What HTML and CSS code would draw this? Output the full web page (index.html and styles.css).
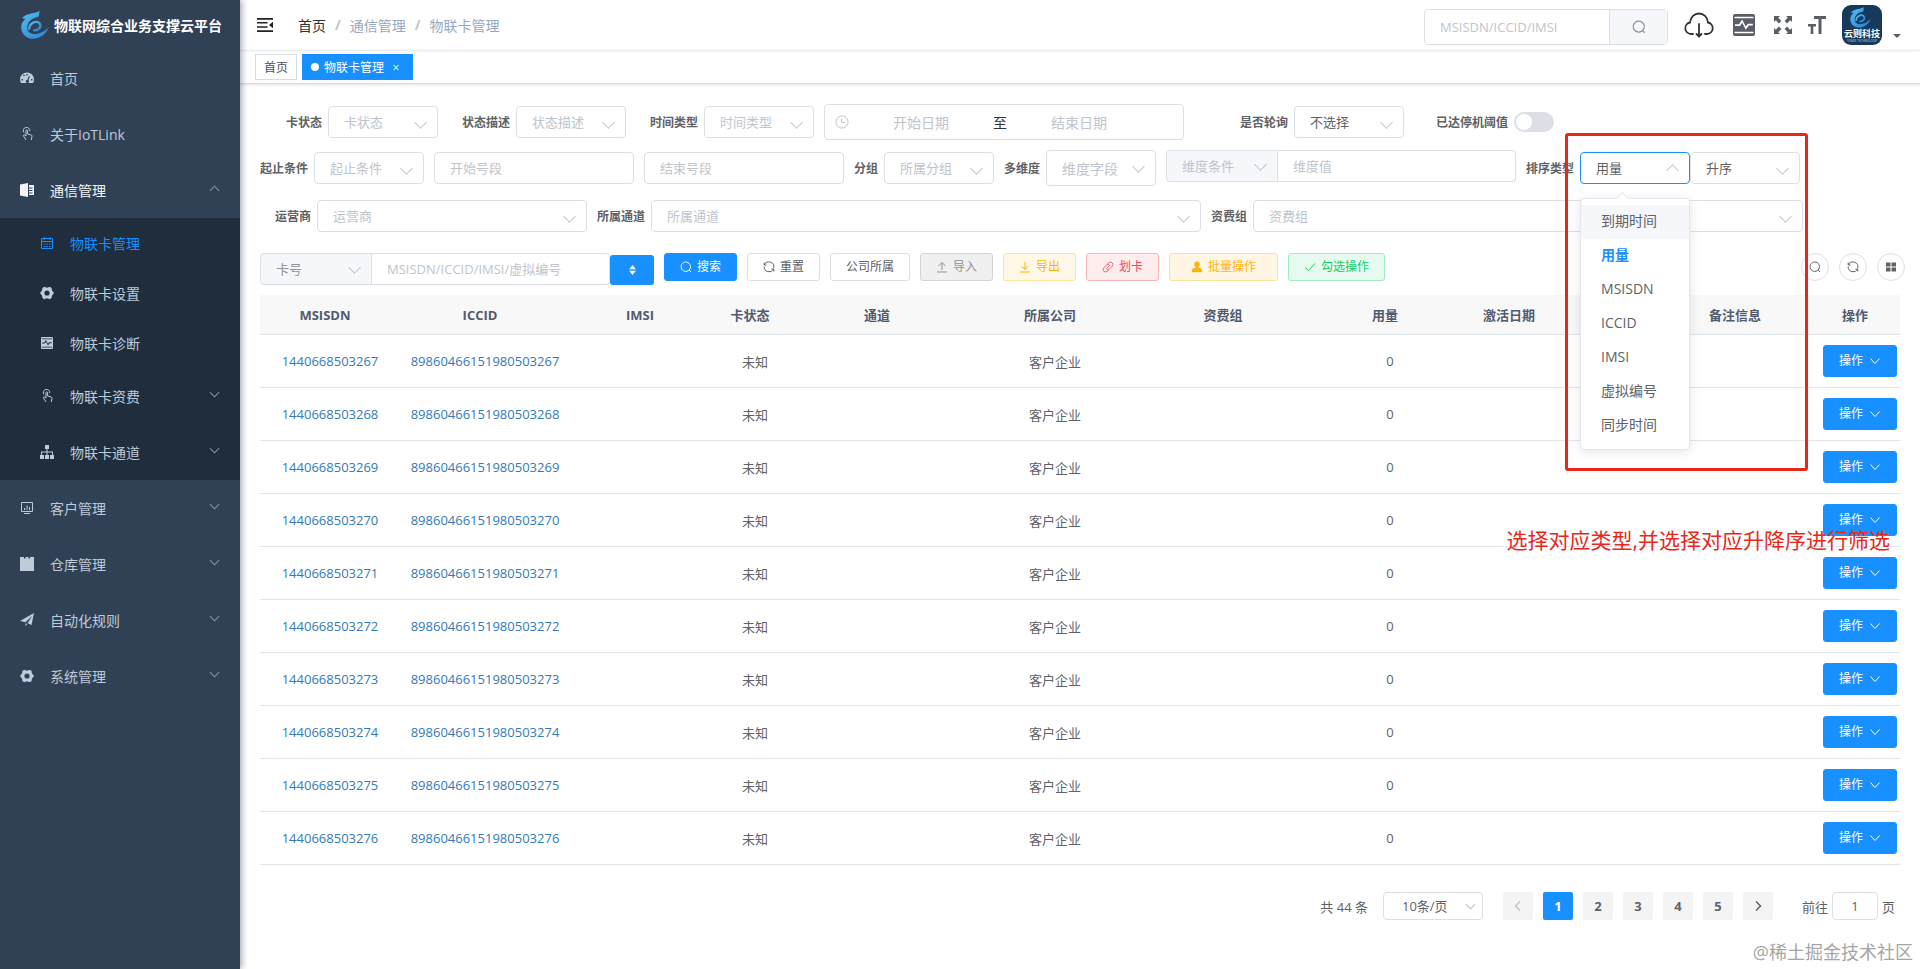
FILE: index.html
```html
<!DOCTYPE html>
<html lang="zh-CN">
<head>
    <meta charset="UTF-8">
    <meta name="viewport" content="width=device-width, initial-scale=1.0">
    <title>物联卡管理</title>
    <link rel="stylesheet" href="styles.css">
</head>
<body>
    <svg class="sprite" aria-hidden="true">
        <defs>
            <linearGradient id="logo-blue" x1="0" y1="0" x2="1" y2="1">
                <stop offset="0" stop-color="#52bdf0"/>
                <stop offset="1" stop-color="#2a7fd0"/>
            </linearGradient>
        </defs>
        <symbol id="i-logo" viewBox="0 0 86 84">
            <path fill="url(#logo-blue)" d="M57 0 54 17C30 20 17 38 20 55c4 20 40 20 65-7C76 72 52 86 32 83 8 80-4 56 4 36l10-13-10-1C16 6 38 9 57 0Z"/>
            <path fill="none" stroke="url(#logo-blue)" stroke-width="7" d="M25 56C25 38 44 27 56 36 65 46 54 60 38 58"/>
        </symbol>
        <symbol id="i-dashboard" viewBox="0 0 14 14">
            <path fill="currentColor" fill-rule="evenodd" d="M7 1.500a7 7 0 0 0-7 7c0 1.400.4 2.600 1 3.500h12c.6-.9 1-2.100 1-3.500a7 7 0 0 0-7-7ZM6.300 3h1.400v1.500H6.300ZM3 4.300l1-.9 1 1-1 1ZM1.500 8H3v1.400H1.500ZM11 8h1.500v1.400H11ZM8.800 5l1.100.4-1.400 3.700a1.600 1.600 0 1 1-1.100-.4Z"/>
        </symbol>
        <symbol id="i-finger" viewBox="0 0 14 14">
            <path fill="none" stroke="currentColor" d="M4 5.500A3.200 3.200 0 1 1 9.700 4M6 9V3.600a.8.8 0 0 1 1.600 0V7l3.400.9c.9.300 1.100 1 .9 1.800L11.300 13M6 9 4.600 8c-1-.4-1.600.4-1 1.200L6 13"/>
        </symbol>
        <symbol id="i-book" viewBox="0 0 14 14">
            <path fill="currentColor" fill-rule="evenodd" d="M0 1.500 8 0v14l-8-1.500ZM9 2h5v10H9v-1.500h3.500v-1H9V8h3.500V7H9V5.500h3.500v-1H9Z"/>
        </symbol>
        <symbol id="i-calendar" viewBox="0 0 14 14">
            <path fill="none" stroke="currentColor" d="M1.500 2.500h11v10h-11ZM1.500 5.500h11M4 1v3M10 1v3M3.500 8h1.500M6.300 8h1.500M9 8h1.500M3.500 10.500h1.500M6.300 10.500h1.500M9 10.500h1.500"/>
        </symbol>
        <symbol id="i-gear" viewBox="0 0 14 14">
            <path fill="currentColor" fill-rule="evenodd" d="M4 .8 7 1.800 10 .8l1.700 1.400.2 2L14 7l-2.100 2.800-.2 2L10 13.200l-3-1-3 1-1.700-1.400-.2-2L0 7l2.100-2.800.2-2ZM7 4.400a2.600 2.600 0 1 0 0 5.200 2.600 2.600 0 0 0 0-5.200Z"/>
        </symbol>
        <symbol id="i-monitor" viewBox="0 0 22 22">
            <path fill="currentColor" fill-rule="evenodd" d="M2 0h18q2 0 2 2v18q0 2-2 2H2q-2 0-2-2V2q0-2 2-2ZM1.500 2.800v1.400h19V2.800ZM1.500 17.800v1.400h19v-1.400ZM2 10.200v1.800h5l2.200-3.200 3.600 7 3-4.300h4v-1.700h-5l-2 2.800-3.700-7L6 10.200Z"/>
        </symbol>
        <symbol id="i-tree" viewBox="0 0 14 14">
            <path fill="currentColor" d="M5 0h4v4H7.500v2.500H13V10h1v4h-4v-4h2V7.500H7.500V10H9v4H5v-4h1.500V7.500H2V10h2v4H0v-4h1V6.500h5.500V4H5Z"/>
        </symbol>
        <symbol id="i-screen" viewBox="0 0 14 14">
            <path fill="none" stroke="currentColor" d="M1.500 1.500h11v9h-11ZM4 12.500h6M4.500 9V7M7 9V4.500M9.500 9V6"/>
        </symbol>
        <symbol id="i-box" viewBox="0 0 14 14">
            <path fill="currentColor" d="M0 0h4v1.500h1.500V0h3v1.500H10V0h4v14H0Z"/>
        </symbol>
        <symbol id="i-plane" viewBox="0 0 14 14">
            <path fill="currentColor" d="M14 0 11.500 12 7.500 10.200 12 3 5.500 9.300 0 8ZM5.500 10.300 7.200 11 5.500 13.500Z"/>
        </symbol>
        <symbol id="i-fold" viewBox="0 0 16 14">
            <path fill="currentColor" d="M0 0h16v1.800H0ZM0 4h10.500v1.600H0ZM0 8.200h10.500v1.600H0ZM0 12.200h16V14H0ZM16 3.800v6.400L12 7Z"/>
        </symbol>
        <symbol id="i-cloud" viewBox="0 0 30 26">
            <path fill="none" stroke="currentColor" stroke-width="1.800" stroke-linecap="round" d="M9 22H7A5.800 5.800 0 0 1 6 10.500C6.500 5 10.500 1.500 15 1.500S23.500 5 24 10.500A5.800 5.800 0 0 1 23 22H21M15 12v12M12.500 22l2.500 2.500 2.500-2.500"/>
        </symbol>
        <symbol id="i-full" viewBox="0 0 18 18">
            <path fill="currentColor" d="M0 0h6L4.200 1.800l3.200 3.200L5 7.400 1.800 4.200 0 6ZM18 0v6l-1.800-1.800L13 7.400 10.600 5l3.200-3.200L12 0ZM0 18v-6l1.800 1.800L5 10.600 7.400 13l-3.200 3.200L6 18ZM18 18h-6l1.800-1.800-3.200-3.200 2.400-2.400 3.200 3.200L18 12Z"/>
        </symbol>
        <symbol id="i-size" viewBox="0 0 18 18">
            <path fill="currentColor" d="M6 0h12v3h-4.500v15h-3V3H6ZM0 8h8v2.600H5.300V18H2.700v-7.400H0Z"/>
        </symbol>
        <symbol id="i-search" viewBox="0 0 12 12">
            <path fill="none" stroke="currentColor" d="M5.800 1a4.700 4.700 0 1 0 .01 0ZM9.200 9.200l1.800 1.800"/>
        </symbol>
        <symbol id="i-refresh" viewBox="0 0 12 12">
            <path fill="none" stroke="currentColor" d="M3.500 4H1.200V1.500M1.400 3.800A5 5 0 0 1 10.800 7M8.500 8h2.300v2.500M10.600 8.200A5 5 0 0 1 1.200 5.500"/>
        </symbol>
        <symbol id="i-upload" viewBox="0 0 12 12">
            <path fill="none" stroke="currentColor" d="M1 11h10M6 9V1.500M2.500 5 6 1.500 9.500 5"/>
        </symbol>
        <symbol id="i-download" viewBox="0 0 12 12">
            <path fill="none" stroke="currentColor" d="M1 11h10M6 1v7.500M2.500 5 6 8.500 9.500 5"/>
        </symbol>
        <symbol id="i-link" viewBox="0 0 12 12">
            <path fill="none" stroke="currentColor" stroke-width=".8" d="M4 8 8 4M5 3.500l1.700-1.700a2.400 2.400 0 0 1 3.500 3.500L7.500 8a2.400 2.400 0 0 1-2.500.5M7 8.500l-1.700 1.700a2.400 2.400 0 0 1-3.500-3.500L4.500 4A2.400 2.400 0 0 1 7 3.500"/>
        </symbol>
        <symbol id="i-user" viewBox="0 0 12 12">
            <path fill="currentColor" d="M6 .5a2.800 2.800 0 0 1 1.500 5.200v1.100c2.300.2 3.500 1.200 3.500 2.700v1.700H1V9.500c0-1.500 1.200-2.500 3.500-2.700V5.700A2.800 2.800 0 0 1 6 .5Z"/>
        </symbol>
        <symbol id="i-check" viewBox="0 0 12 12">
            <path fill="none" stroke="currentColor" d="M1 6.500 4.500 9.500 11 2.500"/>
        </symbol>
        <symbol id="i-grid" viewBox="0 0 12 12">
            <path fill="currentColor" d="M1 1.500h4.500v4H1ZM6.500 1.500H11v4H6.500ZM1 6.500h4.500v4H1ZM6.500 6.500H11v4H6.500Z"/>
        </symbol>
        <symbol id="i-clock" viewBox="0 0 14 14">
            <path fill="none" stroke="currentColor" d="M7 1a6 6 0 1 0 .01 0ZM6.500 3.500v4H10"/>
        </symbol>
        <symbol id="i-caret" viewBox="0 0 8 12">
            <path fill="currentColor" d="M4 0 8 5H0ZM4 12 0 7h8Z"/>
        </symbol>
        <symbol id="i-down" viewBox="0 0 12 12">
            <path fill="none" stroke="currentColor" d="M1.500 3.500 6 8.500l4.500-5"/>
        </symbol>
        <symbol id="i-left" viewBox="0 0 12 12">
            <path fill="none" stroke="currentColor" stroke-width="1.500" d="M8 1.500 3.500 6 8 10.500"/>
        </symbol>
        <symbol id="i-right" viewBox="0 0 12 12">
            <path fill="none" stroke="currentColor" stroke-width="1.500" d="M4 1.500 8.500 6 4 10.500"/>
        </symbol>
    </svg>

    <div class="app">
        <aside class="sidebar">
            <a class="logo" href="#">
                <svg><use href="#i-logo"/></svg>
                <h1>物联网综合业务支撑云平台</h1>
            </a>
            <nav class="menu">
                <a href="#"><svg><use href="#i-dashboard"/></svg><span>首页</span></a>
                <a href="#"><svg><use href="#i-finger"/></svg><span>关于IoTLink</span></a>
                <a href="#" class="open"><svg><use href="#i-book"/></svg><span>通信管理</span><i class="arrow up"></i></a>
                <div class="submenu">
                    <a href="#" class="leaf active"><svg><use href="#i-calendar"/></svg><span>物联卡管理</span></a>
                    <a href="#" class="leaf"><svg><use href="#i-gear"/></svg><span>物联卡设置</span></a>
                    <a href="#" class="leaf"><svg class="small"><use href="#i-monitor"/></svg><span>物联卡诊断</span></a>
                    <a href="#"><svg><use href="#i-finger"/></svg><span>物联卡资费</span><i class="arrow"></i></a>
                    <a href="#"><svg><use href="#i-tree"/></svg><span>物联卡通道</span><i class="arrow"></i></a>
                </div>
                <a href="#"><svg><use href="#i-screen"/></svg><span>客户管理</span><i class="arrow"></i></a>
                <a href="#"><svg><use href="#i-box"/></svg><span>仓库管理</span><i class="arrow"></i></a>
                <a href="#"><svg><use href="#i-plane"/></svg><span>自动化规则</span><i class="arrow"></i></a>
                <a href="#"><svg><use href="#i-gear"/></svg><span>系统管理</span><i class="arrow"></i></a>
            </nav>
        </aside>

        <div class="main">
            <header class="navbar">
                <button class="fold" aria-label="折叠菜单"><svg><use href="#i-fold"/></svg></button>
                <nav class="breadcrumb">
                    <a href="#">首页</a><b>/</b><span>通信管理</span><b>/</b><span>物联卡管理</span>
                </nav>
                <div class="top-search">
                    <input type="text" placeholder="MSISDN/ICCID/IMSI" aria-label="MSISDN/ICCID/IMSI">
                    <button aria-label="搜索"><svg><use href="#i-search"/></svg></button>
                </div>
                <div class="tools">
                    <button class="cloud" aria-label="下载"><svg><use href="#i-cloud"/></svg></button>
                    <button class="monitor" aria-label="监控"><svg><use href="#i-monitor"/></svg></button>
                    <button class="full" aria-label="全屏"><svg><use href="#i-full"/></svg></button>
                    <button class="size" aria-label="布局大小"><svg><use href="#i-size"/></svg></button>
                    <button class="avatar" aria-label="用户">
                        <svg viewBox="0 0 40 40">
                            <rect width="40" height="40" rx="9" fill="#17395b"/>
                            <use href="#i-logo" x="8" y="2" width="21" height="21"/>
                            <text x="20" y="32" class="avatar-name">云则科技</text>
                            <text x="20" y="37" class="avatar-sub">YUNZE TECHNOLOGY</text>
                        </svg>
                        <i class="caret"></i>
                    </button>
                </div>
            </header>

            <div class="tags">
                <a href="#">首页</a>
                <a href="#" class="active">物联卡管理<span class="close">×</span></a>
            </div>

            <main class="content">
                <form class="filters">
                    <div class="row">
                        <div class="field">
                            <label class="w68" for="f-status">卡状态</label>
                            <span class="select"><select id="f-status" class="empty"><option>卡状态</option></select></span>
                        </div>
                        <div class="field">
                            <label class="w68" for="f-desc">状态描述</label>
                            <span class="select"><select id="f-desc" class="empty"><option>状态描述</option></select></span>
                        </div>
                        <div class="field">
                            <label class="w68" for="f-time">时间类型</label>
                            <span class="select"><select id="f-time" class="empty"><option>时间类型</option></select></span>
                        </div>
                        <div class="date-range">
                            <svg><use href="#i-clock"/></svg>
                            <input type="text" placeholder="开始日期" aria-label="开始日期">
                            <span>至</span>
                            <input type="text" placeholder="结束日期" aria-label="结束日期">
                        </div>
                        <div class="field">
                            <label class="w100" for="f-poll">是否轮询</label>
                            <span class="select"><select id="f-poll"><option>不选择</option></select></span>
                        </div>
                        <div class="field">
                            <label class="w100" for="f-limit">已达停机阈值</label>
                            <input type="checkbox" role="switch" id="f-limit" class="switch">
                        </div>
                    </div>

                    <div class="row">
                        <div class="field">
                            <label for="f-range">起止条件</label>
                            <span class="select"><select id="f-range" class="empty"><option>起止条件</option></select></span>
                        </div>
                        <input type="text" class="text" placeholder="开始号段" aria-label="开始号段">
                        <input type="text" class="text" placeholder="结束号段" aria-label="结束号段">
                        <div class="field">
                            <label for="f-dept">分组</label>
                            <span class="select"><select id="f-dept" class="empty"><option>所属分组</option></select></span>
                        </div>
                        <div class="field">
                            <label for="f-dim">多维度</label>
                            <span class="select medium"><select id="f-dim" class="empty"><option>维度字段</option></select></span>
                        </div>
                        <div class="group top">
                            <span class="select"><select class="empty" aria-label="维度条件"><option>维度条件</option></select></span>
                            <input type="text" placeholder="维度值" aria-label="维度值">
                        </div>
                        <div class="field sort">
                            <label for="f-sort">排序类型</label>
                            <span class="select focus"><select id="f-sort"><option>用量</option></select></span>
                            <span class="select"><select aria-label="排序方式"><option>升序</option></select></span>
                            <ul class="dropdown" role="listbox">
                                <li class="hover" role="option">到期时间</li>
                                <li class="selected" role="option" aria-selected="true">用量</li>
                                <li role="option">MSISDN</li>
                                <li role="option">ICCID</li>
                                <li role="option">IMSI</li>
                                <li role="option">虚拟编号</li>
                                <li role="option">同步时间</li>
                            </ul>
                            <div class="mark-box"></div>
                        </div>
                    </div>

                    <div class="row last">
                        <div class="field">
                            <label class="w57" for="f-op">运营商</label>
                            <span class="select wide"><select id="f-op" class="empty"><option>运营商</option></select></span>
                        </div>
                        <div class="field">
                            <label for="f-channel">所属通道</label>
                            <span class="select xwide"><select id="f-channel" class="empty"><option>所属通道</option></select></span>
                        </div>
                        <div class="field">
                            <label for="f-pkg">资费组</label>
                            <span class="select xwide"><select id="f-pkg" class="empty"><option>资费组</option></select></span>
                        </div>
                    </div>
                </form>

                <div class="actions">
                    <div class="group">
                        <span class="select"><select class="dark" aria-label="查询类型"><option>卡号</option></select></span>
                        <input type="text" placeholder="MSISDN/ICCID/IMSI/虚拟编号" aria-label="卡号">
                    </div>
                    <button class="toggle" aria-label="展开"><svg><use href="#i-caret"/></svg></button>
                    <button class="btn primary"><svg><use href="#i-search"/></svg>搜索</button>
                    <button class="btn"><svg><use href="#i-refresh"/></svg>重置</button>
                    <button class="btn">公司所属</button>
                    <button class="btn info"><svg><use href="#i-upload"/></svg>导入</button>
                    <button class="btn warning"><svg><use href="#i-download"/></svg>导出</button>
                    <button class="btn danger"><svg><use href="#i-link"/></svg>划卡</button>
                    <button class="btn batch"><svg><use href="#i-user"/></svg>批量操作</button>
                    <button class="btn success"><svg><use href="#i-check"/></svg>勾选操作</button>
                    <div class="round-tools">
                        <button aria-label="隐藏搜索"><svg><use href="#i-search"/></svg></button>
                        <button aria-label="刷新"><svg><use href="#i-refresh"/></svg></button>
                        <button aria-label="显隐列"><svg><use href="#i-grid"/></svg></button>
                    </div>
                </div>

                <table class="cards">
                    <colgroup>
                        <col class="c-msisdn"><col class="c-iccid"><col class="c-imsi"><col class="c-status">
                        <col class="c-channel"><col class="c-company"><col class="c-package"><col class="c-used">
                        <col class="c-date"><col class="c-sync"><col class="c-remark"><col class="c-op">
                    </colgroup>
                    <thead>
                        <tr>
                            <th>MSISDN</th><th>ICCID</th><th>IMSI</th><th>卡状态</th>
                            <th>通道</th><th>所属公司</th><th>资费组</th><th>用量</th>
                            <th>激活日期</th><th></th><th>备注信息</th><th>操作</th>
                        </tr>
                    </thead>
                    <tbody id="rows"></tbody>
                </table>

                <div class="pagination">
                    <span class="total">共 44 条</span>
                    <span class="select"><select aria-label="每页条数"><option>10条/页</option></select></span>
                    <div class="pager">
                        <button disabled aria-label="上一页"><svg><use href="#i-left"/></svg></button>
                        <button class="active">1</button>
                        <button>2</button>
                        <button>3</button>
                        <button>4</button>
                        <button>5</button>
                        <button aria-label="下一页"><svg><use href="#i-right"/></svg></button>
                    </div>
                    <label for="page">前往</label>
                    <input type="text" id="page" value="1">
                    <span>页</span>
                </div>
            </main>
        </div>
    </div>

    <p class="mark-text">选择对应类型,并选择对应升降序进行筛选</p>
    <p class="watermark">@稀土掘金技术社区</p>

    <script>
        const rows = document.getElementById('rows');
        for (let i = 3267; i <= 3276; i++) {
            const tr = document.createElement('tr');
            tr.innerHTML = '<td><a href="#">144066850' + i + '</a></td>' +
                '<td><a href="#">8986046615198050' + i + '</a></td>' +
                '<td></td><td>未知</td><td></td><td>客户企业</td><td></td><td>0</td>' +
                '<td></td><td></td><td></td>' +
                '<td><button class="btn primary op">操作<svg><use href="#i-down"/></svg></button></td>';
            rows.appendChild(tr);
        }
    </script>
</body>
</html>
```
FILE: styles.css
```css
* {
    box-sizing: border-box;
}
body {
    margin: 0;
    font-family: "Open Sans", "Noto Sans CJK SC", sans-serif;
    font-size: 14px;
    color: #606266;
    background: #fff;
}
a {
    color: inherit;
    text-decoration: none;
}
button, input, select {
    margin: 0;
    padding: 0;
    font-family: inherit;
    font-size: 13px;
    color: #606266;
    background: none;
    border: none;
    outline: none;
}
button {
    cursor: pointer;
}
svg {
    display: block;
    flex: none;
}
.sprite {
    position: absolute;
    width: 0;
    height: 0;
}
.app {
    display: flex;
    min-height: 100vh;
}

/* sidebar */
.sidebar {
    flex: none;
    width: 240px;
    background: #304156;
    color: #bfcbd9;
    box-shadow: 2px 0 6px rgba(0, 21, 41, .35);
    z-index: 2;
}
.logo {
    display: flex;
    align-items: center;
    gap: 4px;
    height: 50px;
    padding-left: 20px;
}
.logo svg {
    width: 30px;
    height: 28px;
}
.logo h1 {
    margin: 0;
    color: #fff;
    font-size: 14px;
    font-weight: 700;
    white-space: nowrap;
}
.menu a {
    display: flex;
    align-items: center;
    height: 56px;
    padding: 0 22px 0 20px;
}
.menu svg {
    width: 14px;
    height: 14px;
    margin-right: 16px;
}
.menu svg.small {
    padding: 1px;
}
.menu span {
    flex: 1;
}
.menu .open {
    color: #f4f4f5;
}
.submenu {
    background: #1f2d3d;
}
.menu .submenu a {
    padding-left: 40px;
}
.menu .submenu .leaf {
    height: 50px;
}
.submenu .active {
    color: #1890ff;
}
.arrow {
    width: 7px;
    height: 7px;
    margin-bottom: 8px;
    border: solid #8391a2;
    border-width: 0 1px 1px 0;
    transform: rotate(45deg);
}
.arrow.up {
    margin-bottom: 0;
    border-width: 1px 0 0 1px;
}

/* top bar */
.main {
    flex: 1;
    min-width: 0;
}
.navbar {
    display: flex;
    align-items: center;
    height: 50px;
    padding-right: 19px;
    box-shadow: 0 1px 2px rgba(0, 21, 41, .1);
}
.fold {
    padding: 0 16px 0 17px;
    color: #222;
}
.fold svg {
    width: 16px;
    height: 14px;
}
.breadcrumb {
    display: flex;
    padding: 0 9px;
    color: #97a8be;
}
.breadcrumb a {
    color: #303133;
}
.breadcrumb b {
    margin: 0 9px;
    color: #c0c4cc;
}
.top-search {
    display: flex;
    width: 244px;
    height: 36px;
    margin: 4px 16px 0 auto;
    border: 1px solid #dcdfe6;
    border-radius: 4px;
}
.top-search input {
    flex: 1;
    min-width: 0;
    padding: 0 15px;
    font-size: 13px;
}
.top-search button {
    width: 58px;
    padding-left: 22px;
    color: #909399;
    background: #f5f7fa;
    border-left: 1px solid #dcdfe6;
}
.top-search svg {
    width: 14px;
    height: 14px;
}
.tools {
    display: flex;
    align-items: center;
    color: #5a5e66;
}
.tools button {
    color: inherit;
}
.tools .cloud {
    color: #303133;
    margin-right: 19px;
}
.cloud svg {
    width: 30px;
    height: 26px;
}
.tools .monitor {
    margin-right: 19px;
}
.monitor svg {
    width: 22px;
    height: 22px;
}
.tools .full, .tools .size {
    margin-right: 16px;
}
.full svg, .size svg {
    width: 18px;
    height: 18px;
}
.avatar {
    display: flex;
    align-items: flex-end;
    gap: 11px;
}
.avatar svg {
    width: 40px;
    height: 40px;
}
.avatar-name {
    font-size: 9px;
    font-weight: 700;
    text-anchor: middle;
    fill: #fff;
}
.avatar-sub {
    font-size: 3px;
    text-anchor: middle;
    fill: #c5d3e0;
}
.caret {
    margin-bottom: 7px;
    border: 4px solid transparent;
    border-top-color: #5a5e66;
    border-bottom: none;
}
input::placeholder {
    color: #c0c4cc;
    opacity: 1;
}

/* opened page tags */
.tags {
    display: flex;
    gap: 5px;
    height: 34px;
    padding: 4px 15px;
    border-bottom: 1px solid #d8dce5;
    box-shadow: 0 1px 3px rgba(0, 0, 0, .12);
}
.tags a {
    display: flex;
    align-items: center;
    height: 26px;
    padding: 0 8px;
    border: 1px solid #d8dce5;
    color: #495060;
    font-size: 12px;
}
.tags .active {
    color: #fff;
    background: #1890ff;
    border-color: #1890ff;
}
.tags .active::before {
    content: "";
    width: 8px;
    height: 8px;
    margin-right: 5px;
    border-radius: 50%;
    background: #fff;
}
.close {
    width: 16px;
    margin-left: 4px;
    text-align: center;
}

/* filters */
.content {
    padding: 20px;
}
.filters {
    display: flex;
    flex-direction: column;
    gap: 10px;
}
.row {
    display: flex;
    align-items: center;
    gap: 10px;
    height: 36px;
}
.row.last {
    height: 32px;
    margin-top: 4px;
}
.field {
    display: flex;
    align-items: center;
    flex: none;
    position: relative;
}
label {
    font-size: 12px;
    font-weight: 700;
    white-space: nowrap;
}
.field label {
    padding-right: 6px;
    text-align: right;
}
.w57 {
    width: 57px;
}
.w68 {
    width: 68px;
}
.w100 {
    width: 100px;
}
.select {
    position: relative;
    display: block;
    flex: none;
    width: 110px;
    height: 32px;
}
.select select {
    appearance: none;
    width: 100%;
    height: 100%;
    padding: 0 15px;
    border: 1px solid #dcdfe6;
    border-radius: 4px;
    background: #fff;
}
.select select.empty {
    color: #c0c4cc;
}
.select::after {
    content: "";
    position: absolute;
    top: 12px;
    right: 13px;
    width: 8px;
    height: 8px;
    border: solid #c0c4cc;
    border-width: 0 1px 1px 0;
    transform: rotate(45deg);
    pointer-events: none;
}
.select.focus select {
    border-color: #1890ff;
}
.select.focus::after {
    top: 14px;
    transform: rotate(225deg);
}
.select.medium {
    height: 36px;
}
.select.medium select {
    font-size: 14px;
}
.select.wide {
    width: 270px;
}
.select.xwide {
    width: 550px;
}
.text {
    width: 200px;
    height: 32px;
    padding: 0 15px;
    border: 1px solid #dcdfe6;
    border-radius: 4px;
}
.date-range {
    display: flex;
    align-items: center;
    flex: none;
    width: 360px;
    height: 36px;
    padding: 0 10px;
    border: 1px solid #dcdfe6;
    border-radius: 4px;
    color: #303133;
}
.date-range svg {
    width: 14px;
    height: 14px;
    margin-right: 2px;
    color: #c0c4cc;
}
.date-range input {
    width: 140px;
    font-size: 14px;
    text-align: center;
}
.date-range span {
    width: 18px;
    text-align: center;
}
.switch {
    appearance: none;
    width: 40px;
    height: 20px;
    padding: 2px;
    border-radius: 10px;
    background: #dcdfe6;
}
.switch::before {
    content: "";
    display: block;
    width: 16px;
    height: 16px;
    border-radius: 50%;
    background: #fff;
}
.group {
    display: flex;
    flex: none;
    width: 350px;
    height: 32px;
}
.group.top {
    align-self: flex-start;
}
.group .select {
    width: 112px;
}
.group .select::after {
    top: 10px;
}
.group select {
    background: #f5f7fa;
    border-radius: 4px 0 0 4px;
}
.group select.dark {
    color: #909399;
}
.group input {
    flex: 1;
    min-width: 0;
    padding: 0 15px;
    border: 1px solid #dcdfe6;
    border-left: none;
    border-radius: 0 4px 4px 0;
}

/* opened sort list */
.dropdown {
    position: absolute;
    top: 46px;
    left: 54px;
    z-index: 3;
    width: 110px;
    margin: 0;
    padding: 6px 0;
    border: 1px solid #e4e7ed;
    border-radius: 4px;
    background: #fff;
    box-shadow: 0 2px 12px rgba(0, 0, 0, .1);
    list-style: none;
}
.dropdown::before {
    content: "";
    position: absolute;
    top: -5px;
    left: 37px;
    width: 8px;
    height: 8px;
    border: solid #e4e7ed;
    border-width: 1px 0 0 1px;
    background: #fff;
    transform: rotate(45deg);
}
.dropdown li {
    height: 34px;
    padding: 0 20px;
    line-height: 32px;
}
.dropdown .hover {
    background: #f5f7fa;
}
.dropdown .selected {
    color: #1890ff;
    font-weight: 700;
}
.mark-box {
    position: absolute;
    top: -19px;
    left: 39px;
    z-index: 4;
    width: 243px;
    height: 338px;
    border: 3px solid #e7271a;
    border-radius: 3px;
    pointer-events: none;
}

/* buttons above the table */
.actions {
    display: flex;
    align-items: flex-start;
    gap: 10px;
    height: 32px;
    margin: 21px 0 10px;
}
.toggle {
    display: flex;
    align-items: center;
    justify-content: center;
    width: 44px;
    height: 30px;
    margin: 2px 0 0 -10px;
    border-radius: 3px;
    color: #fff;
    background: #1890ff;
}
.toggle svg {
    width: 7px;
    height: 10px;
}
.btn {
    display: flex;
    align-items: center;
    gap: 5px;
    height: 28px;
    padding: 0 15px;
    border: 1px solid #dcdfe6;
    border-radius: 3px;
    font-size: 12px;
    line-height: 24px;
    white-space: nowrap;
}
.btn svg {
    width: 12px;
    height: 12px;
}
.btn.primary {
    color: #fff;
    background: #1890ff;
    border-color: #1890ff;
}
.btn.info {
    color: #909399;
    background: #f0f0f1;
    border-color: #d3d4d6;
}
.btn.warning {
    color: #fab600;
    background: #fff8e6;
    border-color: #ffe399;
}
.btn.danger {
    color: #f5455c;
    background: #ffeded;
    border-color: #fab6b6;
}
.btn.batch {
    padding: 0 21px;
    color: #ffb114;
    background: #fff6e3;
    border-color: #fbe29b;
}
.btn.success {
    color: #13ce66;
    background: #e7faf0;
    border-color: #a1ebc2;
}
.round-tools {
    display: flex;
    gap: 10px;
    margin: 0 -5px 0 auto;
}
.round-tools button {
    width: 28px;
    height: 28px;
    padding-left: 7px;
    border: 1px solid #dcdfe6;
    border-radius: 50%;
}
.round-tools svg {
    width: 12px;
    height: 12px;
}

/* card table */
.cards {
    width: 100%;
    table-layout: fixed;
    border-collapse: separate;
    border-spacing: 0;
    text-align: center;
    font-size: 13px;
}
.c-msisdn, .c-used {
    width: 140px;
}
.c-iccid {
    width: 170px;
}
.c-imsi {
    width: 150px;
}
.c-status {
    width: 70px;
}
.c-channel, .c-package {
    width: 184px;
}
.c-company {
    width: 162px;
}
.c-date {
    width: 108px;
}
.c-sync {
    width: 92px;
}
.c-remark {
    width: 160px;
}
.c-op {
    width: 80px;
}
.cards th {
    height: 40px;
    padding: 0 10px 0 0;
    background: #f8f8f9;
    color: #515a6e;
    border-bottom: 1px solid #dfe6ec;
}
.cards td {
    height: 53px;
    padding: 0;
    border-bottom: 1px solid #dfe6ec;
}
.cards a {
    color: #337ab7;
}
.btn.op {
    gap: 6px;
    height: 32px;
    margin: 0 auto;
}

/* pagination */
.pagination {
    display: flex;
    align-items: center;
    justify-content: flex-end;
    height: 28px;
    margin-top: 27px;
    padding-right: 5px;
    font-size: 13px;
}
.pagination .select {
    width: 100px;
    height: 28px;
    margin: 0 20px 0 15px;
}
.pagination select {
    padding: 0 18px;
}
.pagination .select::after {
    top: 9px;
    right: 9px;
    width: 6px;
    height: 6px;
}
.pager {
    display: flex;
    gap: 10px;
    margin-right: 29px;
}
.pager button {
    display: flex;
    align-items: center;
    justify-content: center;
    width: 30px;
    height: 28px;
    border-radius: 2px;
    background: #f4f4f5;
    font-weight: 700;
}
.pager button:disabled {
    color: #c0c4cc;
}
.pager .active {
    color: #fff;
    background: #1890ff;
}
.pager svg {
    width: 12px;
    height: 12px;
}
.pagination label {
    font-size: 13px;
    font-weight: 400;
}
.pagination input {
    width: 46px;
    height: 28px;
    margin: 0 4px;
    border: 1px solid #dcdfe6;
    border-radius: 4px;
    text-align: center;
}

/* notes laid over the page */
.mark-text {
    position: absolute;
    top: 524px;
    right: 30px;
    z-index: 4;
    margin: 0;
    color: #e7271a;
    font-size: 21px;
    line-height: 32px;
}
.watermark {
    position: absolute;
    right: 7px;
    bottom: 5px;
    margin: 0;
    color: #a5a5a5;
    font-size: 18px;
    line-height: 24px;
}
```
